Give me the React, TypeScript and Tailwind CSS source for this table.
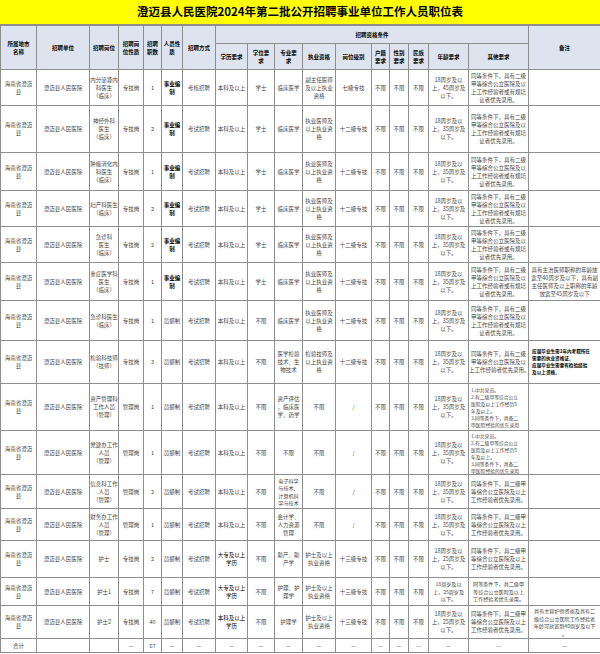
import React from 'react';

type CellVal = string | [string, string];

const widths = [36, 53, 29, 25, 18, 21, 33, 32, 27, 28, 33, 36, 18, 19, 20, 40, 60, 72];

const area = '海南省澄迈|县';
const unit = '澄迈县人民医院';
const bian: CellVal = ['事业编|制', 'font-bold text-black'];
const doctorOther = '同等条件下，具有二级|甲等综合公立医院及以|上工作经验者或有规培|证者优先录用。';
const age35 = '18周岁及以|上，35周岁及|以下。';
const practice = '执业医师及|以上执业资|格';
const mgmtOther: CellVal = [
  '1.中共党员。|2.有二级甲等综合公立|医院及以上工作经历5|年及以上。|3.同等条件下，具备二|甲医院经验的优先录用',
  'text-left pl-[2px] text-[4.8px] leading-[7px]',
];
const shortOther = '同等条件下，具二级甲|等综合公立医院及以上|工作经验者优先录用。';

const rows: { h: number; cells: CellVal[] }[] = [
  { h: 36, cells: [area, unit, '内分泌肾内|科医生|（临床）', '专技岗', '1', bian, '考核招聘', '本科及以上', '学士', '临床医学', '副主任医师|及以上执业|资格', '七级专技', '不限', '不限', '不限', '18周岁及以|上，45周岁及|以下。', doctorOther, ''] },
  { h: 47, cells: [area, unit, '神经外科|医生|（临床）', '专技岗', '2', bian, '考试招聘', '本科及以上', '学士', '临床医学', practice, '十二级专技', '不限', '不限', '不限', age35, doctorOther, ''] },
  { h: 38, cells: [area, unit, '肿瘤消化内|科医生|（临床）', '专技岗', '1', bian, '考试招聘', '本科及以上', '学士', '临床医学', practice, '十二级专技', '不限', '不限', '不限', age35, doctorOther, ''] },
  { h: 36, cells: [area, unit, '妇产科医生|（临床）', '专技岗', '2', bian, '考试招聘', '本科及以上', '学士', '临床医学', practice, '十二级专技', '不限', '不限', '不限', age35, doctorOther, ''] },
  { h: 36, cells: [area, unit, '急诊科|医生|（临床）', '专技岗', '2', bian, '考试招聘', '本科及以上', '学士', '临床医学', practice, '十二级专技', '不限', '不限', '不限', age35, doctorOther, ''] },
  { h: 38, cells: [area, unit, '重症医学科|医生|（临床）', '专技岗', '1', bian, '考试招聘', '本科及以上', '学士', '临床医学', practice, '十二级专技', '不限', '不限', '不限', age35, doctorOther, '具有主治医师职称的年龄放|宽至40周岁及以下，具有副|主任医师及以上职称的年龄|放宽至45周岁及以下'] },
  { h: 40, cells: [area, unit, '急诊科医生|（临床）', '专技岗', '1', '员额制', '考试招聘', '本科及以上', '不限', '临床医学', practice, '十二级专技', '不限', '不限', '不限', age35, doctorOther, ''] },
  { h: 43, cells: [area, unit, '检验科技师|（技师）', '专技岗', '3', '员额制', '考试招聘', '本科及以上', '不限', '医学检验|技术、生|物技术', '检验技师及|以上执业资|格', '十二级专技', '不限', '不限', '不限', age35, '同等条件下，具有二级|甲等综合公立医院及以|上工作经验者优先录用。', ['应届毕业生需2年内考取所在|需要的执业资格证。|应届毕业生需要有检验经验|及以上资格。', 'text-left pl-[3px] font-bold text-black text-[4.6px] leading-[7px]']] },
  { h: 47, cells: [area, unit, '资产管理科|工作人员|（管理）', '管理岗', '1', '员额制', '考试招聘', '本科及以上', '不限', '资产评估|，临床医|学、药学', '不限', '/', '不限', '不限', '不限', age35, mgmtOther, ''] },
  { h: 44, cells: [area, unit, '党建办工作|人员|（管理）', '管理岗', '1', '员额制', '考试招聘', '本科及以上', '不限', '不限', '不限', '/', '不限', '不限', '不限', age35, mgmtOther, ''] },
  { h: 34, cells: [area, unit, '信息科工作|人员|（管理）', '管理岗', '2', '员额制', '考试招聘', '本科及以上', '不限', ['电子科学|与技术、|计算机科|学与技术', 'leading-[7.5px] text-[5.1px]'], '不限', '/', '不限', '不限', '不限', age35, shortOther, ''] },
  { h: 32, cells: [area, unit, '财务办工作|人员|（管理）', '管理岗', '1', '员额制', '考试招聘', '本科及以上', '不限', '会计学、|人力资源|管理', '不限', '/', '不限', '不限', '不限', age35, shortOther, ''] },
  { h: 37, cells: [area, unit, '护士', '专技岗', '2', '员额制', '考试招聘', ['大专及以上|学历', 'text-black'], '不限', '助产、助|产学', '护士及以上|执业资格', '十三级专技', '不限', '不限', '不限', '18周岁及以|上，25周岁及|以下。', shortOther, ''] },
  { h: 28, cells: [area, unit, '护士1', '专技岗', '7', '员额制', '考试招聘', ['大专及以上|学历', 'text-black'], '不限', '护理、护|理学', '护士及以上|执业资格', '十三级专技', '不限', '不限', '不限', ['18周岁及以|上，25周岁及|以下。', 'text-[5.1px] leading-[7.5px]'], ['同等条件下，具二级甲|等综合公立医院及以上|工作经验者优先录用。', 'text-[5.1px] leading-[7.5px]'], ''] },
  { h: 33, cells: [area, unit, '护士2', '专技岗', '40', '员额制', '考试招聘', ['本科及以上|学历', 'text-black'], '不限', '护理学', '护士及以上|执业资格', '十三级专技', '不限', '不限', '不限', '18周岁及以|上，25周岁及|以下。', shortOther, ['具有主管护师资格及具有二|级综合公立医院工作经验者|年龄可放宽到40周岁及以下|。', 'text-[5.1px] leading-[7.5px]']] },
  { h: 14, cells: ['合计', '', '', '—', '67', '—', '—', '—', '—', '—', '—', '—', '—', '—', '—', '—', '—', '—'] },
];

function Lines({ text }: { text: string }) {
  return (
    <>
      {text.split('|').map((l, i) => (
        <div key={i} className="whitespace-nowrap">{l}</div>
      ))}
    </>
  );
}

const td = 'border border-[#8e8e8e] p-0 align-middle text-center';

export default function App() {
  return (
    <div className="w-[600px] h-[654px] bg-white text-[#444]" style={{ fontFamily: '"Noto Sans CJK SC", "Noto Sans", sans-serif' }}>
      <div className="h-[25px] bg-[#ffff00] border-b border-[#8e8e8e] flex items-center justify-center text-[11.5px] font-bold text-black">
        澄迈县人民医院2024年第二批公开招聘事业单位工作人员职位表
      </div>
      <table className="table-fixed border-collapse w-[600px] text-[5.5px] leading-[8px] font-normal">
        <colgroup>
          {widths.map((w, i) => (
            <col key={i} style={{ width: w }} />
          ))}
        </colgroup>
        <thead className="bg-[#dde4ef] text-black font-bold text-[5.5px]">
          <tr className="h-[18px]">
            <th rowSpan={2} className={td}><Lines text="所属地市|名称" /></th>
            <th rowSpan={2} className={td}>招聘单位</th>
            <th rowSpan={2} className={td}>招聘岗位</th>
            <th rowSpan={2} className={td}><Lines text="招聘岗|位性质" /></th>
            <th rowSpan={2} className={td}><Lines text="招聘|职数" /></th>
            <th rowSpan={2} className={td}><Lines text="人员性|质" /></th>
            <th rowSpan={2} className={td}>招聘方式</th>
            <th colSpan={10} className={td}>招聘资格条件</th>
            <th rowSpan={2} className={td}>备注</th>
          </tr>
          <tr className="h-[26px]">
            <th className={td}>学历要求</th>
            <th className={td}><Lines text="学位要|求" /></th>
            <th className={td}><Lines text="专业要|求" /></th>
            <th className={td}>执业资格</th>
            <th className={td}>岗位级别</th>
            <th className={td}><Lines text="户籍|要求" /></th>
            <th className={td}><Lines text="性别|要求" /></th>
            <th className={td}><Lines text="民族|要求" /></th>
            <th className={td}>年龄要求</th>
            <th className={td}>其他要求</th>
          </tr>
        </thead>
        <tbody>
          {rows.map((r, ri) => (
            <tr key={ri} style={{ height: r.h }}>
              {r.cells.map((c, ci) => {
                const [text, extra] = typeof c === 'string' ? [c, ''] : c;
                return (
                  <td key={ci} className={`${td} ${extra}`}>
                    <Lines text={text} />
                  </td>
                );
              })}
            </tr>
          ))}
        </tbody>
      </table>
    </div>
  );
}
